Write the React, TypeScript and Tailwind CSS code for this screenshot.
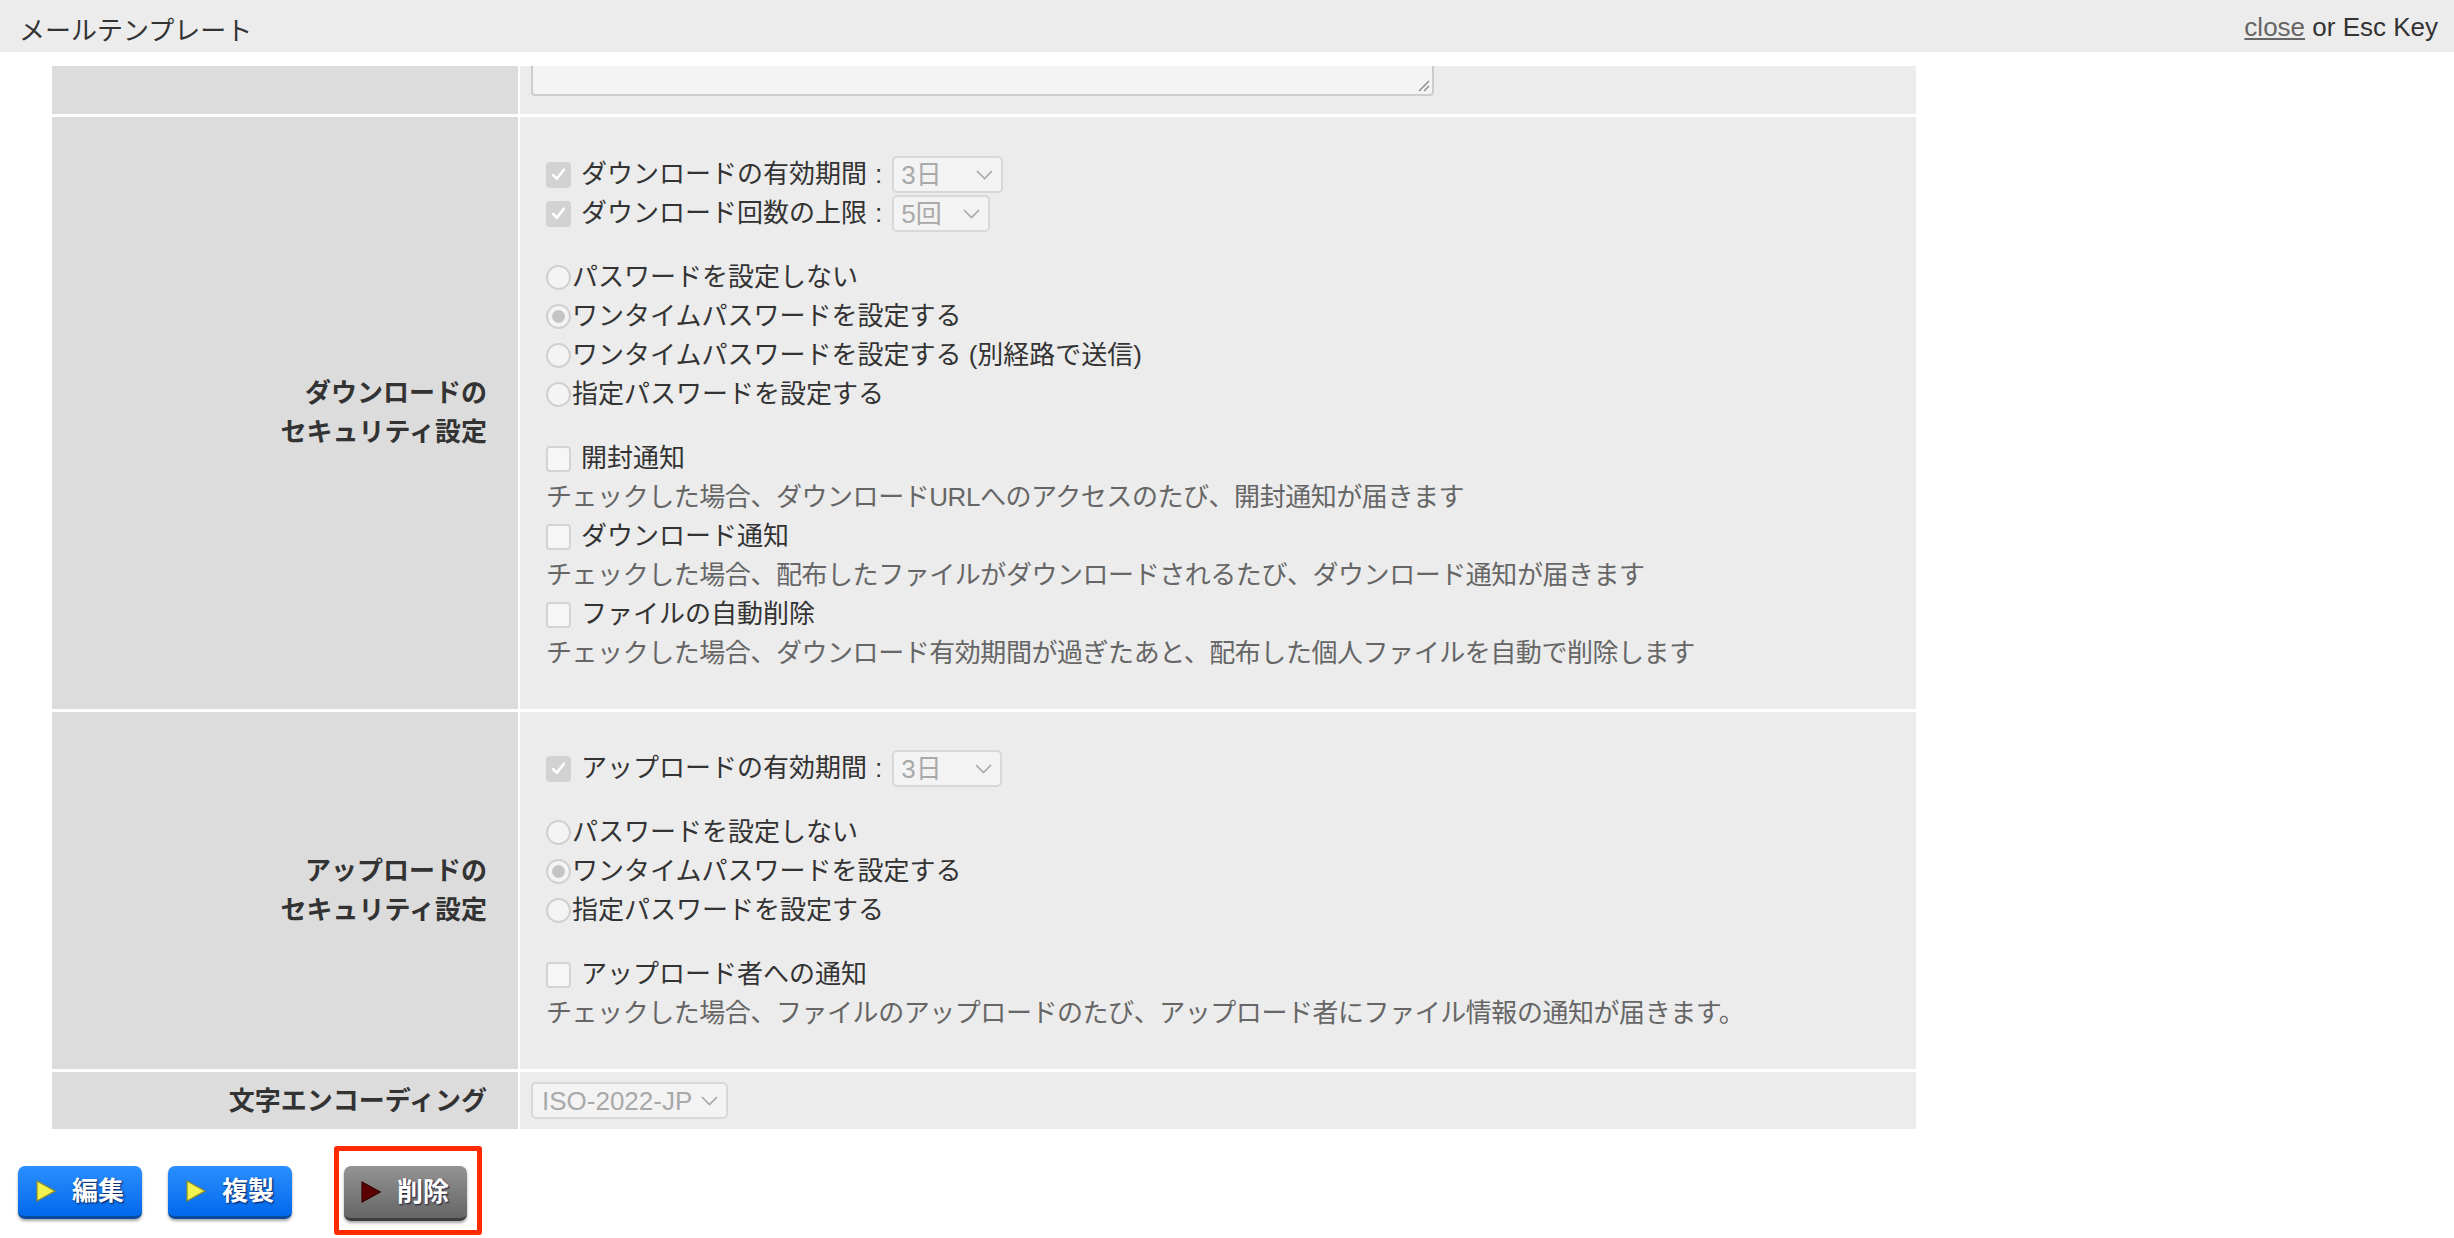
import React from "react";

const FONT = "font-['Liberation_Sans','Noto_Sans_CJK_JP',sans-serif]";

function CheckedBox() {
  return (
    <span className="inline-flex h-[26px] w-[25px] shrink-0 items-center justify-center rounded-[4px] bg-[#d2d2d2]">
      <svg width="17" height="17" viewBox="0 0 16 16">
        <path d="M3 8.5 L6.5 12 L13 3.5" fill="none" stroke="#fff" strokeWidth="2.4" strokeLinecap="round" strokeLinejoin="round" />
      </svg>
    </span>
  );
}

function EmptyBox() {
  return <span className="inline-block h-[26px] w-[25px] shrink-0 rounded-[4px] border-2 border-[#d4d4d4] bg-[#f6f6f6]" />;
}

function Radio({ on }: { on?: boolean }) {
  return (
    <span className="inline-flex h-[25px] w-[25px] shrink-0 items-center justify-center rounded-full border-2 border-[#d0d0d0] bg-[#f4f4f4]">
      {on && <span className="h-[13px] w-[13px] rounded-full bg-[#c4c4c4]" />}
    </span>
  );
}

function Chevron() {
  return (
    <svg width="17" height="10" viewBox="0 0 17 10">
      <path d="M1 1 L8.5 8.5 L16 1" fill="none" stroke="#a8a8a8" strokeWidth="1.6" />
    </svg>
  );
}

function Select({ value, w }: { value: string; w: string }) {
  return (
    <span className={`inline-flex h-[37px] items-center justify-between rounded-[5px] border-2 border-[#d8d8d8] bg-[#f3f3f3] pl-[7px] pr-[8px] text-[26px] leading-none text-[#a9a9a9] ${w}`}>
      <span>{value}</span>
      <Chevron />
    </span>
  );
}

function CheckLine({ label, value, w }: { label: string; value: string; w: string }) {
  return (
    <div className="flex h-[39px] items-center">
      <CheckedBox />
      <span className="ml-[10px]">{label}</span>
      <span className="ml-[8px] mr-[10px]">:</span>
      <Select value={value} w={w} />
    </div>
  );
}

function RadioLine({ label, on }: { label: string; on?: boolean }) {
  return (
    <div className="flex h-[39px] items-center">
      <Radio on={on} />
      <span className="ml-[1px]">{label}</span>
    </div>
  );
}

function NotifyLine({ label }: { label: string }) {
  return (
    <div className="flex h-[39px] items-center">
      <EmptyBox />
      <span className="ml-[10px]">{label}</span>
    </div>
  );
}

function Desc({ children }: { children: React.ReactNode }) {
  return <div className="h-[39px] leading-[39px] tracking-[-0.45px] text-[#666]">{children}</div>;
}

function Triangle({ fill, edge }: { fill: string; edge: string }) {
  return (
    <svg width="20" height="22" viewBox="0 0 20 22">
      <polygon points="1,1 19,11 1,21" fill={fill} stroke={edge} strokeWidth="1.2" />
    </svg>
  );
}

function Btn({ label, gray }: { label: string; gray?: boolean }) {
  return (
    <button
      className={
        gray
          ? "flex h-[55px] w-[123px] items-center rounded-[7px] border-b-[3px] border-[#3e3e3e] bg-gradient-to-b from-[#949494] to-[#666666] pl-[17px] shadow-[0_2px_3px_rgba(0,0,0,0.35)]"
          : "flex h-[53px] w-[124px] items-center rounded-[7px] border-b-[3px] border-[#0a4a9c] bg-gradient-to-b from-[#2a8fff] to-[#0068ea] pl-[18px] shadow-[0_2px_3px_rgba(0,0,0,0.35)]"
      }
    >
      {gray ? <Triangle fill="#5c0000" edge="#3a0000" /> : <Triangle fill="#f2f24e" edge="#8a8a2a" />}
      <span className="ml-[16px] text-[26px] font-bold text-white [text-shadow:1px_1px_2px_rgba(0,0,40,0.8)]">{label}</span>
    </button>
  );
}

export default function App() {
  return (
    <div className={`min-h-screen bg-white text-[26px] leading-[39px] text-[#333] ${FONT}`}>
      <header className="flex h-[52px] items-center justify-between bg-[#ececec] pl-[19px] pr-[16px]">
        <span className="translate-y-[5px]">メールテンプレート</span>
        <span className="translate-y-[1px]">
          <a className="text-[#666] underline">close</a> or Esc Key
        </span>
      </header>

      <div className="ml-[52px] mt-[14px] grid w-[1864px] grid-cols-[466px_1fr] gap-x-[2px] gap-y-[3px]">
        {/* row 1: textarea tail */}
        <div className="h-[48px] bg-[#dcdcdc]" />
        <div className="h-[48px] bg-[#ececec] pl-[11px]">
          <div className="relative h-[30px] w-[903px] rounded-b-[4px] border-2 border-t-0 border-[#cdcdcd] bg-[#f4f4f4]">
            <svg className="absolute bottom-[2px] right-[2px]" width="14" height="14" viewBox="0 0 14 14">
              <path d="M13 3 L3 13 M13 8 L8 13" stroke="#888" strokeWidth="1.4" />
            </svg>
          </div>
        </div>

        {/* row 2: download security */}
        <div className="flex items-center justify-end bg-[#dcdcdc] pr-[31px] text-right font-bold">
          <div>
            ダウンロードの
            <br />
            セキュリティ設定
          </div>
        </div>
        <div className="flex flex-col gap-[25px] bg-[#ececec] pb-[36px] pl-[26px] pt-[38px]">
          <div>
            <CheckLine label="ダウンロードの有効期間" value="3日" w="w-[111px]" />
            <CheckLine label="ダウンロード回数の上限" value="5回" w="w-[98px]" />
          </div>
          <div>
            <RadioLine label="パスワードを設定しない" />
            <RadioLine label="ワンタイムパスワードを設定する" on />
            <RadioLine label="ワンタイムパスワードを設定する (別経路で送信)" />
            <RadioLine label="指定パスワードを設定する" />
          </div>
          <div>
            <NotifyLine label="開封通知" />
            <Desc>チェックした場合、ダウンロードURLへのアクセスのたび、開封通知が届きます</Desc>
            <NotifyLine label="ダウンロード通知" />
            <Desc>チェックした場合、配布したファイルがダウンロードされるたび、ダウンロード通知が届きます</Desc>
            <NotifyLine label="ファイルの自動削除" />
            <Desc>チェックした場合、ダウンロード有効期間が過ぎたあと、配布した個人ファイルを自動で削除します</Desc>
          </div>
        </div>

        {/* row 3: upload security */}
        <div className="flex items-center justify-end bg-[#dcdcdc] pr-[31px] text-right font-bold">
          <div>
            アップロードの
            <br />
            セキュリティ設定
          </div>
        </div>
        <div className="flex flex-col gap-[25px] bg-[#ececec] pb-[36px] pl-[26px] pt-[37px]">
          <div>
            <CheckLine label="アップロードの有効期間" value="3日" w="w-[110px]" />
          </div>
          <div>
            <RadioLine label="パスワードを設定しない" />
            <RadioLine label="ワンタイムパスワードを設定する" on />
            <RadioLine label="指定パスワードを設定する" />
          </div>
          <div>
            <NotifyLine label="アップロード者への通知" />
            <Desc>チェックした場合、ファイルのアップロードのたび、アップロード者にファイル情報の通知が届きます。</Desc>
          </div>
        </div>

        {/* row 4: encoding */}
        <div className="flex h-[57px] items-center justify-end bg-[#dcdcdc] pr-[31px] font-bold">
          <span className="translate-y-[1px]">文字エンコーディング</span>
        </div>
        <div className="flex h-[57px] items-center bg-[#ececec] pl-[11px]">
          <Select value="ISO-2022-JP" w="w-[197px] !pl-[9px]" />
        </div>
      </div>

      <div className="mt-[37px] flex items-start pl-[18px]">
        <Btn label="編集" />
        <div className="ml-[26px]">
          <Btn label="複製" />
        </div>
        <div className="relative ml-[52px]">
          <Btn label="削除" gray />
          <div className="pointer-events-none absolute bottom-[-14px] left-[-10px] right-[-15px] top-[-20px] rounded-[3px] border-[5px] border-[#ff2a00]" />
        </div>
      </div>
    </div>
  );
}
